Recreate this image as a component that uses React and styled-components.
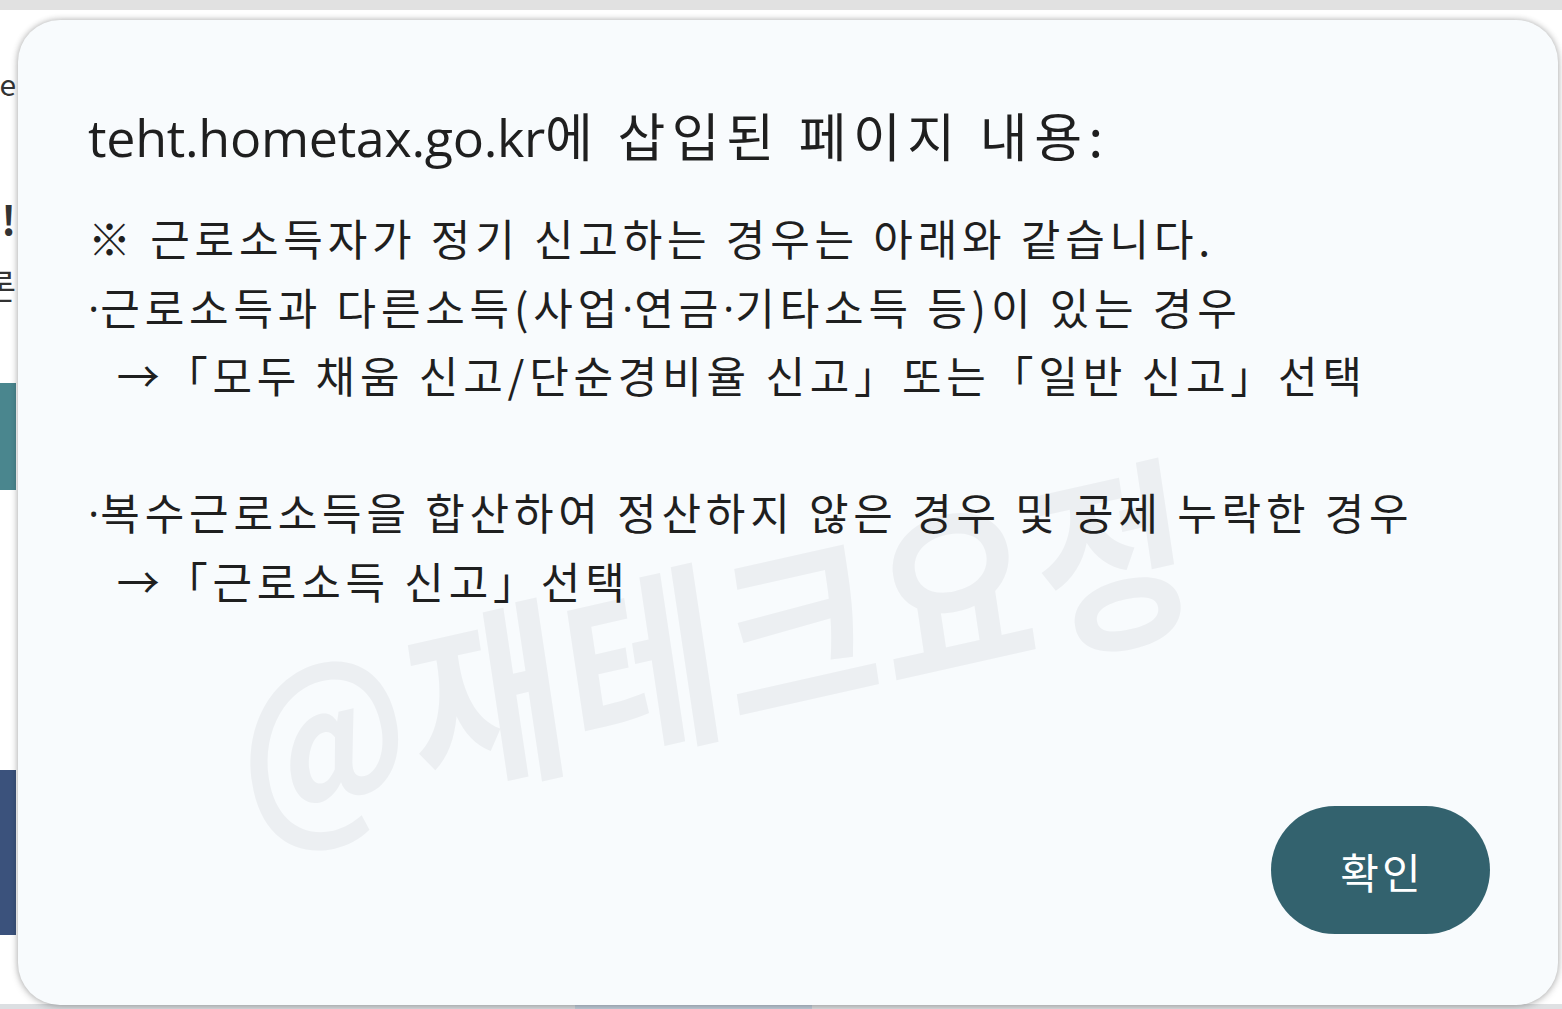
import styled, { createGlobalStyle } from 'styled-components';

const GlobalStyle = createGlobalStyle`
  html, body {
    margin: 0;
    padding: 0;
    background: #ffffff;
    overflow: hidden;
  }
  * {
    box-sizing: border-box;
  }
`;

const Screen = styled.div`
  position: relative;
  width: 1562px;
  height: 1009px;
  display: flex;
  flex-direction: column;
  overflow: hidden;
  font-family: 'Open Sans', 'Noto Sans CJK KR', sans-serif;
`;

const TopBar = styled.div`
  height: 10px;
  background: #e1e1e1;
  flex-shrink: 0;
`;

const PageBody = styled.div`
  flex: 1;
  display: flex;
  justify-content: space-between;
`;

const Rail = styled.div`
  width: 16px;
  display: flex;
  flex-direction: column;
  align-items: ${(p) => (p.$right ? 'flex-start' : 'flex-end')};
  overflow: hidden;
  padding-top: ${(p) => p.$top || 0}px;
`;

const RailText = styled.div`
  font-family: 'Noto Sans CJK KR', sans-serif;
  font-size: ${(p) => p.$size || 28}px;
  font-weight: ${(p) => p.$weight || 400};
  color: #333;
  white-space: nowrap;
  line-height: 1;
  margin-top: ${(p) => p.$mt || 0}px;
`;

const RailBlock = styled.div`
  width: ${(p) => p.$w || 16}px;
  height: ${(p) => p.$h}px;
  background: ${(p) => p.$color};
  margin-top: ${(p) => p.$mt || 0}px;
  flex-shrink: 0;
`;

const BottomStrip = styled.div`
  height: 5px;
  display: flex;
  background: #dcdfe2;
  flex-shrink: 0;
`;

const StripPart = styled.div`
  width: ${(p) => p.$w}px;
  background: ${(p) => p.$color};
`;

const Dialog = styled.div`
  position: absolute;
  left: 18px;
  top: 20px;
  width: 1540px;
  height: 985px;
  border-radius: 42px;
  background: #f8fbfd;
  box-shadow: 0 0 6px rgba(0, 0, 0, 0.28), 0 2px 10px rgba(0, 0, 0, 0.12);
  padding: 82px 68px 71px 70px;
  display: flex;
  flex-direction: column;
  overflow: hidden;
`;

const Title = styled.h1`
  margin: 0;
  font-family: 'Open Sans', 'Noto Sans CJK KR', sans-serif;
  font-size: 52px;
  font-weight: 400;
  line-height: 66px;
  color: #1f1f1f;
  letter-spacing: -0.3px;
  white-space: pre;
  position: relative;
  z-index: 1;
`;

const TitleKo = styled.span`
  font-family: 'Noto Sans CJK KR', sans-serif;
  letter-spacing: 6.5px;
`;

const Message = styled.div`
  margin-top: 33px;
  font-family: 'Noto Sans CJK KR', sans-serif;
  font-size: 43px;
  letter-spacing: 4.8px;
  color: #1f1f1f;
  position: relative;
  z-index: 1;
`;

const Line = styled.div`
  height: 68.5px;
  line-height: 68.5px;
  white-space: pre;
`;

const Dot = styled.span`
  font-family: 'Open Sans', sans-serif;
  letter-spacing: 1px;
`;

const Watermark = styled.div`
  position: absolute;
  left: 696px;
  top: 618px;
  transform: translate(-50%, -50%) matrix(0.976, -0.22, 0.17, 1.14, 0, 0);
  font-family: 'Noto Sans CJK KR', sans-serif;
  font-size: 170px;
  font-weight: 700;
  letter-spacing: 4px;
  color: #eceff2;
  white-space: nowrap;
  line-height: 1;
  pointer-events: none;
  user-select: none;
`;

const Footer = styled.div`
  margin-top: auto;
  display: flex;
  justify-content: flex-end;
  position: relative;
  z-index: 1;
`;

const OkButton = styled.button`
  width: 219px;
  height: 128px;
  border: none;
  border-radius: 64px;
  background: #33626e;
  color: #ffffff;
  font-family: 'Noto Sans CJK KR', sans-serif;
  font-size: 42px;
  letter-spacing: 3px;
  padding: 0 0 0 3px;
  cursor: pointer;
`;

const lines = [
  '※ 근로소득자가 정기 신고하는 경우는 아래와 같습니다.',
  '·근로소득과 다른소득(사업·연금·기타소득 등)이 있는 경우',
  '  →「모두 채움 신고/단순경비율 신고」또는「일반 신고」선택',
  '',
  '·복수근로소득을 합산하여 정산하지 않은 경우 및 공제 누락한 경우',
  '  →「근로소득 신고」선택',
];

// the alert renders the middle dot narrow, so give it a latin font
const renderLine = (text) =>
  text.split('·').map((part, i) => (
    <span key={i}>
      {i > 0 && <Dot>·</Dot>}
      {part}
    </span>
  ));

const App = () => {
  return (
    <Screen>
      <GlobalStyle />
      <TopBar />
      <PageBody>
        <Rail $top={58}>
          <RailText $size={30}>ce</RailText>
          <RailText $size={40} $weight={700} $mt={100}>!</RailText>
          <RailText $size={34} $mt={30}>론</RailText>
          <RailBlock $h={107} $color="#4a868e" $mt={81} />
          <RailBlock $h={165} $color="#3b527c" $mt={280} />
        </Rail>
        <Rail $right $top={182}>
          <RailBlock $w={4} $h={22} $color="#8a8f94" />
          <RailBlock $w={4} $h={78} $color="#b9cdd2" $mt={92} />
          <RailBlock $w={4} $h={3} $color="#9ea3a8" $mt={446} />
          <RailBlock $w={4} $h={3} $color="#9ea3a8" $mt={6} />
        </Rail>
      </PageBody>
      <BottomStrip>
        <StripPart $w={575} $color="#dcdfe2" />
        <StripPart $w={237} $color="#c3cfdc" />
        <StripPart $w={750} $color="#dfe1e3" />
      </BottomStrip>

      <Dialog role="alertdialog">
        <Watermark>@재테크요정</Watermark>
        <Title>
          teht.hometax.go.kr<TitleKo>에 삽입된 페이지 내용:</TitleKo>
        </Title>
        <Message>
          {lines.map((text, i) => (
            <Line key={i}>{renderLine(text)}</Line>
          ))}
        </Message>
        <Footer>
          <OkButton type="button">확인</OkButton>
        </Footer>
      </Dialog>
    </Screen>
  );
};

export default App;
